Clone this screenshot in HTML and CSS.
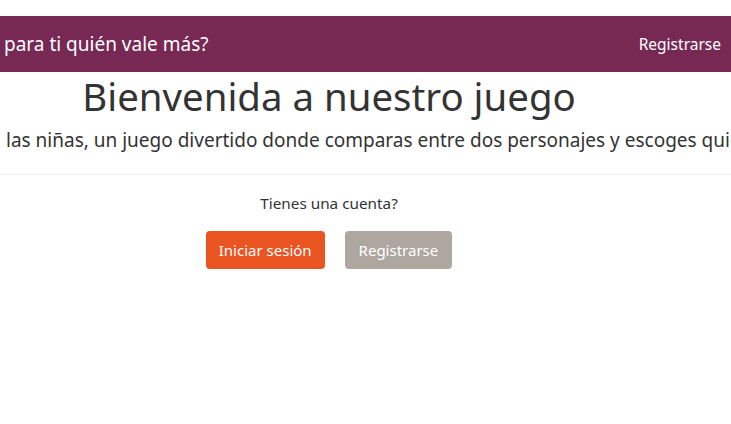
FILE: index.html
```html
<!DOCTYPE html>
<html lang="es">
<head>
<meta charset="utf-8">
<title>Bienvenida</title>
<link rel="stylesheet" href="styles.css">
</head>
<body>
<nav class="navbar">
  <span class="brand">para ti quién vale más?</span>
  <a class="nav-link" href="#">Registrarse</a>
</nav>
<header class="hero">
  <h1 class="title">Bienvenida a nuestro juego</h1>
  <p class="lead">las niñas, un juego divertido donde comparas entre dos personajes y escoges quién vale más.</p>
</header>
<hr class="divider">
<section class="auth">
  <p class="question">Tienes una cuenta?</p>
  <div class="actions">
    <a class="btn btn-primary" href="#">Iniciar sesión</a>
    <a class="btn btn-secondary" href="#">Registrarse</a>
  </div>
</section>
</body>
</html>
```
FILE: styles.css
```css
* { box-sizing: border-box; }
html, body { overflow: hidden; }
body {
  margin: 0;
  padding-top: 16px;
  font-family: "Noto Sans", "Open Sans", sans-serif;
  color: #333333;
  background: #ffffff;
  width: 731px;
}
.navbar {
  height: 56px;
  background: #772953;
  display: flex;
  align-items: center;
  justify-content: space-between;
  padding: 0 10px 0 4px;
}
.brand {
  color: #ffffff;
  font-size: 19px;
  white-space: nowrap;
}
.nav-link {
  color: #ffffff;
  font-size: 15.5px;
  text-decoration: none;
}
.hero {
  width: 658px;
}
.title {
  margin: 0;
  text-align: center;
  font-weight: 400;
  font-size: 38.4px;
  line-height: 48px;
  white-space: nowrap;
}
.lead {
  margin: 6px 0 0 6px;
  font-size: 19px;
  line-height: 28px;
  white-space: nowrap;
}
.divider {
  margin: 20px 0 0;
  border: 0;
  border-top: 1px solid #eeeeee;
}
.auth {
  width: 658px;
  text-align: center;
}
.question {
  margin: 16px 0 0;
  font-size: 15.3px;
  line-height: 24px;
}
.actions {
  margin-top: 16px;
  display: flex;
  justify-content: center;
  gap: 20px;
}
.btn {
  display: inline-block;
  height: 38px;
  line-height: 38px;
  padding: 0 13px;
  border-radius: 4px;
  color: #ffffff;
  font-size: 15px;
  text-decoration: none;
}
.btn-primary { background: #e95420; }
.btn-secondary { background: #aea79f; padding: 0 14px; }
```
